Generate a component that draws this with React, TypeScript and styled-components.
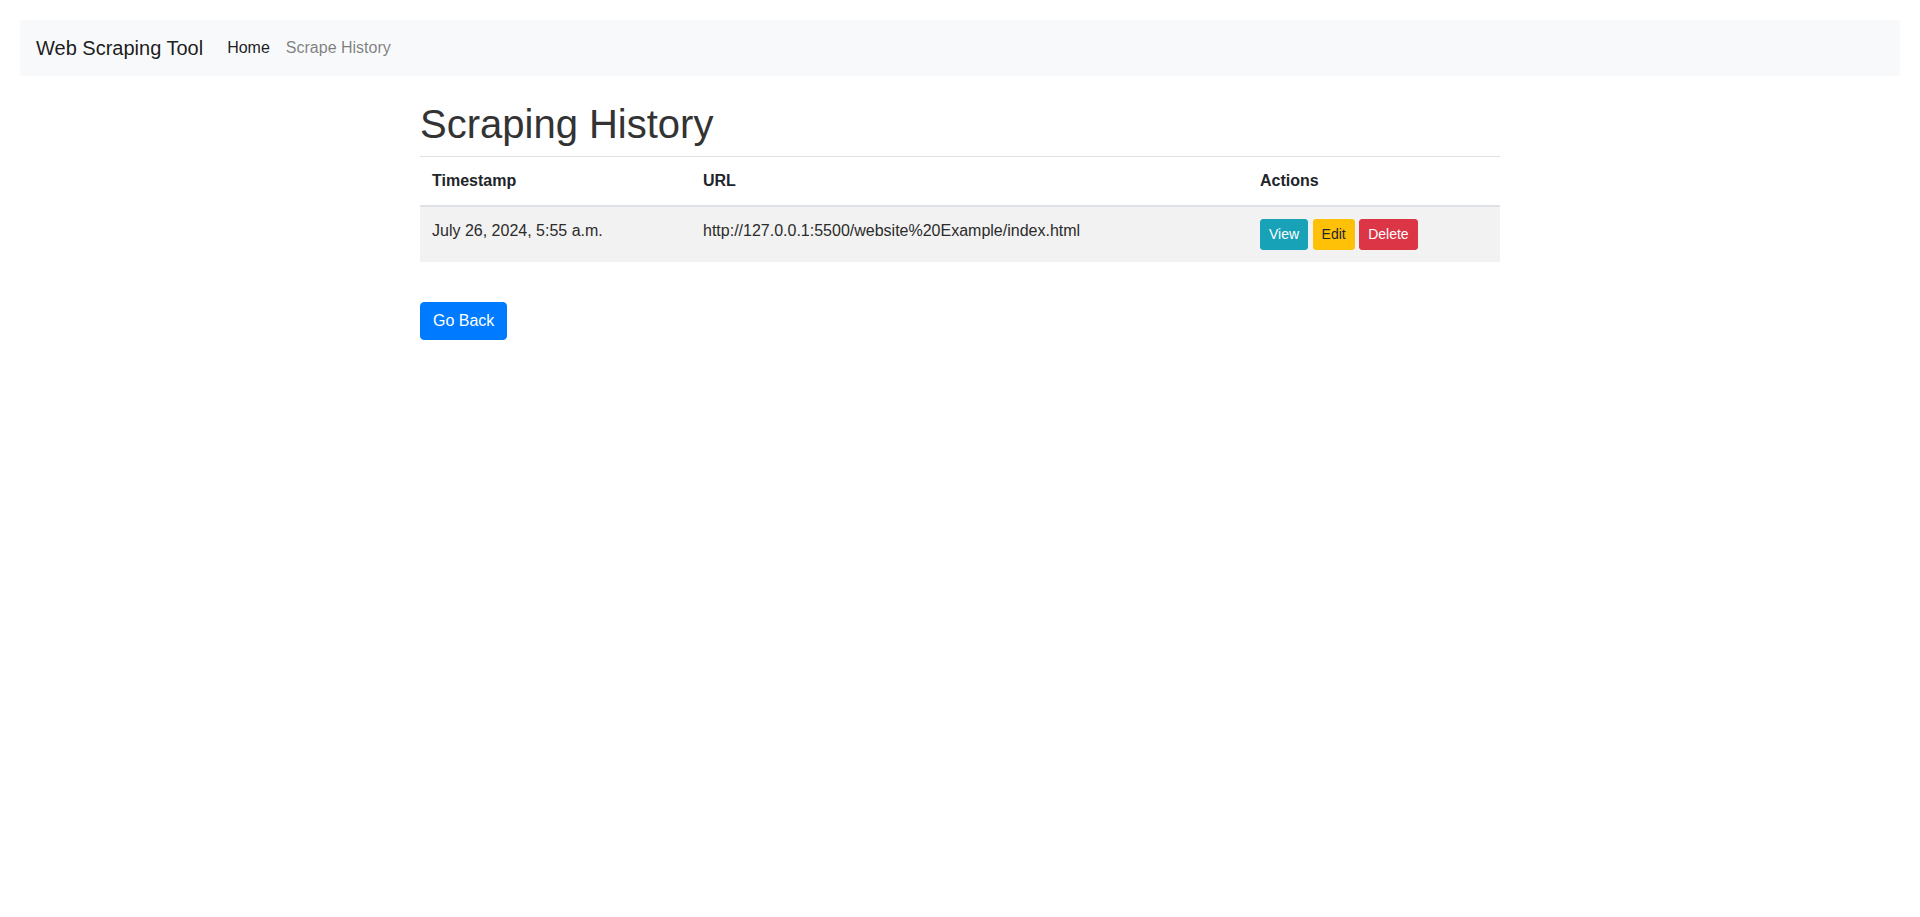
import React from "react";
import styled, { createGlobalStyle } from "styled-components";

const GlobalStyle = createGlobalStyle`
  * {
    box-sizing: border-box;
  }
  body {
    margin: 0;
    padding: 20px;
    font-family: "Liberation Sans", Arial, sans-serif;
    font-size: 16px;
    line-height: 1.5;
    color: #333;
    background-color: #fff;
  }
`;

const Navbar = styled.nav`
  display: flex;
  align-items: center;
  padding: 8px 16px;
  background-color: #f8f9fa;
`;

const Brand = styled.a`
  padding: 5px 0;
  margin-right: 16px;
  font-size: 20px;
  line-height: 1.5;
  color: rgba(0, 0, 0, 0.9);
  text-decoration: none;
  white-space: nowrap;
`;

const NavList = styled.ul`
  display: flex;
  margin: 0;
  padding: 0;
  list-style: none;
`;

const NavLink = styled.a<{ $active?: boolean }>`
  display: block;
  padding: 8px;
  color: ${(p) => (p.$active ? "rgba(0, 0, 0, 0.9)" : "rgba(0, 0, 0, 0.5)")};
  text-decoration: none;
`;

const Container = styled.main`
  width: 1080px;
  margin: 24px auto 0;
`;

const Title = styled.h1`
  margin: 0 0 8px;
  font-size: 40px;
  font-weight: 500;
  line-height: 1.2;
  color: #333;
`;

const Table = styled.table`
  width: 100%;
  margin-bottom: 16px;
  border-collapse: collapse;
  table-layout: fixed;
`;

const HeadCell = styled.th<{ $width: number }>`
  width: ${(p) => p.$width}px;
  padding: 12px;
  text-align: left;
  vertical-align: bottom;
  font-weight: bold;
  color: #212529;
  border-top: 1px solid #dee2e6;
  border-bottom: 2px solid #dee2e6;
`;

const StripedRow = styled.tr`
  background-color: rgba(0, 0, 0, 0.05);
`;

const Cell = styled.td`
  padding: 12px;
  vertical-align: top;
  color: #2b2b2b;
  border-top: 1px solid #dee2e6;
`;

const variants = {
  info: { bg: "#17a2b8", fg: "#fff" },
  warning: { bg: "#ffc107", fg: "#212529" },
  danger: { bg: "#dc3545", fg: "#fff" },
  primary: { bg: "#007bff", fg: "#fff" },
};

const Button = styled.a<{ $variant: keyof typeof variants; $small?: boolean }>`
  display: inline-block;
  padding: ${(p) => (p.$small ? "4px 8px" : "6px 12px")};
  font-size: ${(p) => (p.$small ? "14px" : "16px")};
  line-height: 1.5;
  border: 1px solid ${(p) => variants[p.$variant].bg};
  border-radius: ${(p) => (p.$small ? "3px" : "4px")};
  background-color: ${(p) => variants[p.$variant].bg};
  color: ${(p) => variants[p.$variant].fg};
  text-decoration: none;
  cursor: pointer;
`;

const BackButton = styled(Button)`
  margin-top: 24px;
`;

const history = [
  {
    timestamp: "July 26, 2024, 5:55 a.m.",
    url: "http://127.0.0.1:5500/website%20Example/index.html",
  },
];

const App = () => {
  return (
    <>
      <GlobalStyle />
      <Navbar>
        <Brand href="#">Web Scraping Tool</Brand>
        <NavList>
          <li>
            <NavLink href="#" $active>
              Home
            </NavLink>
          </li>
          <li>
            <NavLink href="#">Scrape History</NavLink>
          </li>
        </NavList>
      </Navbar>
      <Container>
        <Title>Scraping History</Title>
        <Table>
          <thead>
            <tr>
              <HeadCell $width={271}>Timestamp</HeadCell>
              <HeadCell $width={557}>URL</HeadCell>
              <HeadCell $width={252}>Actions</HeadCell>
            </tr>
          </thead>
          <tbody>
            {history.map((item) => (
              <StripedRow key={item.url}>
                <Cell>{item.timestamp}</Cell>
                <Cell>{item.url}</Cell>
                <Cell>
                  <Button $variant="info" $small>View</Button>{" "}
                  <Button $variant="warning" $small>Edit</Button>{" "}
                  <Button $variant="danger" $small>Delete</Button>
                </Cell>
              </StripedRow>
            ))}
          </tbody>
        </Table>
        <BackButton $variant="primary">Go Back</BackButton>
      </Container>
    </>
  );
};

export default App;
